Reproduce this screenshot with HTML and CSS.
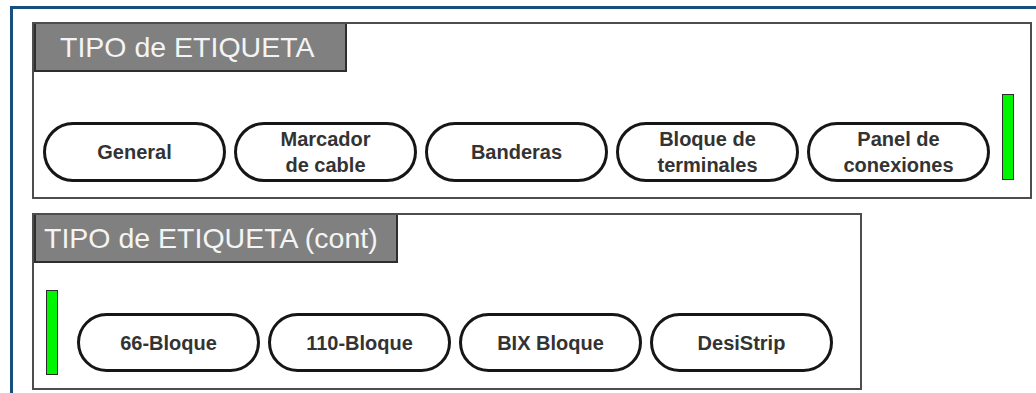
FILE: index.html
```html
<!DOCTYPE html>
<html lang="es">
<head>
  <meta charset="UTF-8">
  <title>Tipo de etiqueta</title>
  <link rel="stylesheet" href="styles.css">
</head>
<body>
  <div class="frame">
    <!-- Primera pantalla -->
    <div class="panel panel-main">
      <div class="panel-title title-main">TIPO de ETIQUETA</div>
      <div class="panel-row">
        <div class="pill">General</div>
        <div class="pill">Marcador<br>de cable</div>
        <div class="pill">Banderas</div>
        <div class="pill">Bloque de<br>terminales</div>
        <div class="pill">Panel de<br>conexiones</div>
        <div class="scroll-bar bar-end"></div>
      </div>
    </div>

    <!-- Segunda pantalla -->
    <div class="panel panel-cont">
      <div class="panel-title title-cont">TIPO de ETIQUETA (cont)</div>
      <div class="panel-row row-cont">
        <div class="scroll-bar bar-start"></div>
        <div class="pill pill-cont">66-Bloque</div>
        <div class="pill pill-cont">110-Bloque</div>
        <div class="pill pill-cont">BIX Bloque</div>
        <div class="pill pill-cont">DesiStrip</div>
      </div>
    </div>
  </div>
</body>
</html>
```

FILE: styles.css
```css
html, body {
  margin: 0;
  padding: 0;
  background-color: #ffffff;
  overflow: hidden;
}
body {
  font-family: "Liberation Sans", Arial, sans-serif;
}
.frame {
  box-sizing: border-box;
  height: 387px;
  margin: 6px 0 0 10px;
  border-top: 3px solid #17507f;
  border-left: 3px solid #17507f;
  padding: 13px 0 0 19px;
}
.panel {
  box-sizing: border-box;
  height: 177px;
  border: 2px solid #4d4d4d;
  background-color: #ffffff;
  display: flex;
  flex-direction: column;
  align-items: flex-start;
}
.panel-main {
  width: 1000px;
}
.panel-cont {
  width: 830px;
  margin-top: 14px;
}
.panel-title {
  background-color: #808080;
  color: #f4f4f4;
  font-size: 28.5px;
  height: 48px;
  line-height: 46px;
  box-sizing: border-box;
  border-left: 2px solid #2e2e2e;
  border-right: 2px solid #2e2e2e;
  border-bottom: 2px solid #2e2e2e;
  white-space: nowrap;
}
.title-main {
  padding: 0 31px 0 24px;
}
.title-cont {
  padding: 0 18px 0 8px;
}
.panel-row {
  flex: 1;
  align-self: stretch;
  display: flex;
  align-items: flex-end;
  gap: 8px;
  padding: 0 0 15px 9px;
}
.row-cont {
  padding: 0 0 13px 12px;
}
.pill {
  box-sizing: border-box;
  width: 183px;
  height: 60px;
  border: 3px solid #161616;
  border-radius: 30px;
  display: flex;
  align-items: center;
  justify-content: center;
  text-align: center;
  font-weight: bold;
  font-size: 20px;
  line-height: 26px;
  color: #333333;
}
.pill-cont {
  height: 59px;
  margin-bottom: 3px;
}
.scroll-bar {
  box-sizing: border-box;
  width: 12px;
  height: 86px;
  background-color: #00f500;
  border: 1px solid #2a2a2a;
}
.bar-end {
  margin-left: 4px;
  margin-bottom: 2px;
}
.bar-start {
  height: 85px;
  margin-right: 11px;
}
```
